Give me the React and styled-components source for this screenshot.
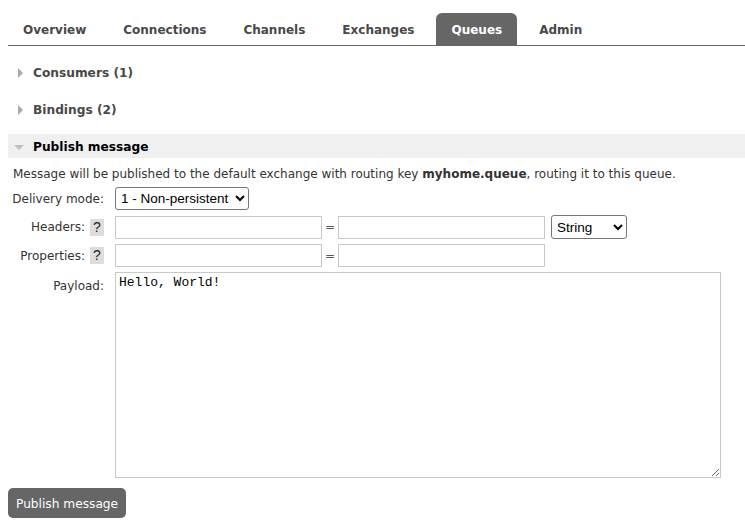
import React from "react";
import styled, { createGlobalStyle } from "styled-components";

const Global = createGlobalStyle`
  html, body { margin: 0; padding: 0; background: #fff; }
  body { font-family: "DejaVu Sans", Verdana, sans-serif; color: #484848; overflow: hidden; }
`;

const Page = styled.div`
  padding: 13px 0 0 8px;
  width: 737px;
`;

const Tabs = styled.ul`
  display: flex;
  list-style: none;
  margin: 0;
  padding: 0;
  height: 32px;
  border-bottom: 1px solid #666;
  gap: 7px;
`;

const Tab = styled.li`
  padding: 0 15px;
  height: 32px;
  line-height: 35px;
  font-size: 12px;
  font-weight: bold;
  color: ${(p) => (p.$active ? "#fff" : "#484848")};
  background: ${(p) => (p.$active ? "#666" : "transparent")};
  border-radius: 6px 6px 0 0;
`;

const Section = styled.div`
  margin-top: ${(p) => p.$mt}px;
`;

const SectionHead = styled.div`
  box-sizing: border-box;
  display: flex;
  align-items: center;
  height: 24px;
  padding-top: 2px;
  font-size: 12.2px;
  font-weight: bold;
  color: ${(p) => (p.$open ? "#000" : "#484848")};
  background: ${(p) => (p.$open ? "#f0f0f0" : "transparent")};
`;

const Arrow = styled.span`
  display: inline-block;
  width: 0;
  height: 0;
  ${(p) =>
    p.$open
      ? `border-left: 5px solid transparent; border-right: 5px solid transparent; border-top: 5px solid #c0c0c0; margin: 0 9px 0 6px;`
      : `border-top: 5px solid transparent; border-bottom: 5px solid transparent; border-left: 5px solid #aaa; margin: 0 10px 0 10px;`}
`;

const Intro = styled.p`
  margin: 8px 0 0 5px;
  font-size: 12px;
  line-height: 16px;
  color: #333;
  b { font-weight: bold; color: #333; }
`;

const Form = styled.div`
  display: flex;
  flex-direction: column;
  gap: 5px;
  margin-top: 5px;
`;

const Row = styled.div`
  display: flex;
  align-items: ${(p) => (p.$top ? "flex-start" : "center")};
  gap: 11px;
`;

const Label = styled.div`
  width: 96px;
  display: flex;
  justify-content: flex-end;
  align-items: center;
  gap: 5px;
  font-size: 12px;
  color: #333;
  white-space: nowrap;
  padding-top: ${(p) => (p.$top ? "7px" : "0")};
`;

const Help = styled.span`
  display: inline-block;
  width: 14px;
  height: 17px;
  line-height: 17px;
  text-align: center;
  background: #ddd;
  color: #222;
  font-family: "Liberation Sans", Arial, sans-serif;
  font-size: 14px;
`;

const Select = styled.select`
  height: ${(p) => p.$h}px;
  width: ${(p) => p.$w}px;
  font-family: "Liberation Sans", Arial, sans-serif;
  font-size: 13.5px;
  color: #000;
  border: 1px solid #767676;
  border-radius: 3px;
  background: #fff;
  padding: 0 1px;
`;

const Input = styled.input`
  box-sizing: border-box;
  width: 207px;
  height: 23px;
  border: 1px solid #c8c8c8;
  padding: 1px 3px;
  margin: 0;
  font-size: 12px;
`;

const Eq = styled.span`
  flex: none;
  width: 16px;
  text-align: center;
  font-size: 12px;
  color: #555;
`;

const Fields = styled.div`
  display: flex;
  align-items: center;
  & > select { margin-left: 6px; }
`;

const Textarea = styled.textarea`
  box-sizing: border-box;
  width: 606px;
  height: 206px;
  border: 1px solid #c8c8c8;
  padding: 2px 3px;
  margin: 0;
  font-family: "Liberation Mono", "Courier New", monospace;
  font-size: 13px;
  color: #000;
  resize: both;
  outline: none;
`;

const Button = styled.button`
  margin-top: 10px;
  height: 30px;
  padding: 2px 8px 0;
  background: #666;
  color: #fff;
  border: none;
  border-radius: 5px;
  font-family: "DejaVu Sans", Verdana, sans-serif;
  font-size: 12.2px;
`;

export default function App() {
  const tabs = ["Overview", "Connections", "Channels", "Exchanges", "Queues", "Admin"];
  return (
    <Page>
      <Global />
      <Tabs>
        {tabs.map((t) => (
          <Tab key={t} $active={t === "Queues"}>{t}</Tab>
        ))}
      </Tabs>
      <Section $mt={14}>
        <SectionHead><Arrow />Consumers (1)</SectionHead>
      </Section>
      <Section $mt={13}>
        <SectionHead><Arrow />Bindings (2)</SectionHead>
      </Section>
      <Section $mt={13}>
        <SectionHead $open><Arrow $open />Publish message</SectionHead>
        <Intro>
          Message will be published to the default exchange with routing key <b>myhome.queue</b>, routing it to this queue.
        </Intro>
        <Form>
          <Row>
            <Label>Delivery mode:</Label>
            <Select $w={134} $h={23} defaultValue="1">
              <option value="1">1 - Non-persistent</option>
              <option value="2">2 - Persistent</option>
            </Select>
          </Row>
          <Row>
            <Label>Headers: <Help>?</Help></Label>
            <Fields>
              <Input />
              <Eq>=</Eq>
              <Input />
              <Select $w={76} $h={24} defaultValue="string">
                <option value="string">String</option>
                <option value="number">Number</option>
              </Select>
            </Fields>
          </Row>
          <Row>
            <Label>Properties: <Help>?</Help></Label>
            <Fields>
              <Input />
              <Eq>=</Eq>
              <Input />
            </Fields>
          </Row>
          <Row $top>
            <Label $top>Payload:</Label>
            <Textarea defaultValue="Hello, World!" />
          </Row>
        </Form>
        <Button>Publish message</Button>
      </Section>
    </Page>
  );
}
